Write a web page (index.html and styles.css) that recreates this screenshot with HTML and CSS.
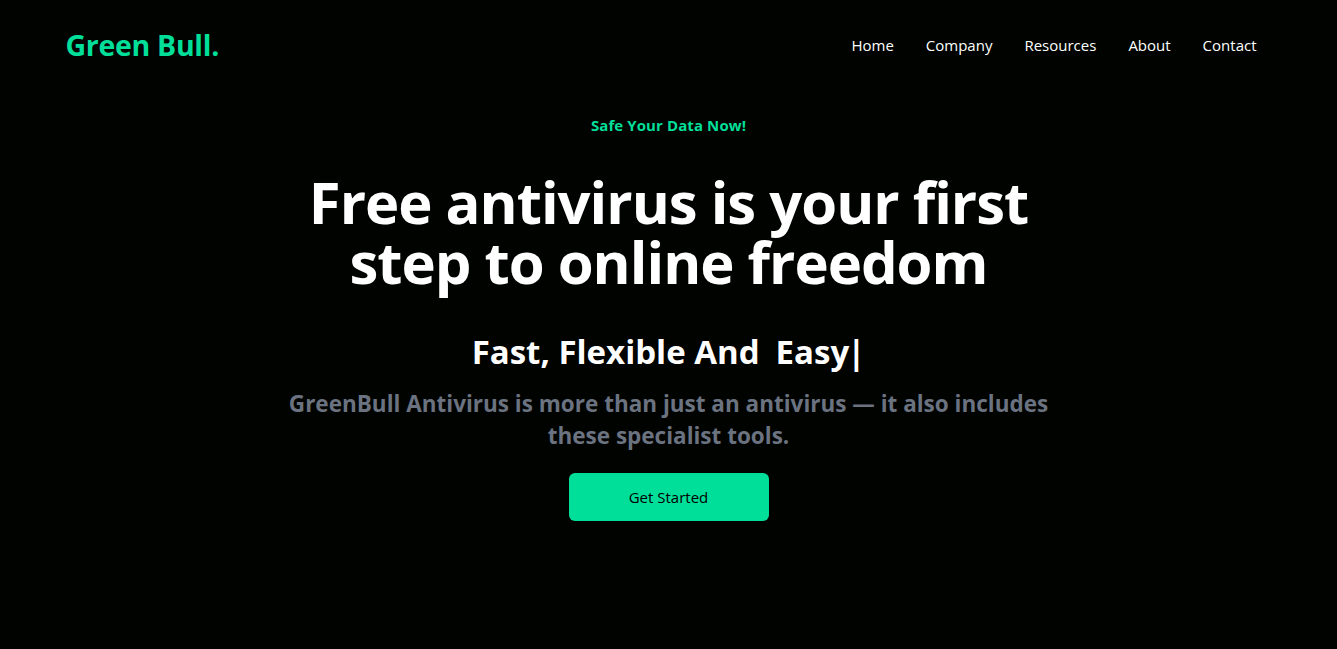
FILE: index.html
```html
<!DOCTYPE html>
<html lang="en">
<head>
<meta charset="utf-8">
<title>Green Bull</title>
<link rel="stylesheet" href="styles.css">
</head>
<body>
<header class="navbar">
  <h1 class="logo">Green Bull.</h1>
  <ul class="nav-links">
    <li>Home</li>
    <li>Company</li>
    <li>Resources</li>
    <li>About</li>
    <li>Contact</li>
  </ul>
</header>
<main class="hero">
  <p class="eyebrow">Safe Your Data Now!</p>
  <h1 class="title">Free antivirus is your first step to online freedom</h1>
  <div class="typed-row">
    <p>Fast, Flexible And</p>
    <span class="typed">Easy<span class="cursor">|</span></span>
  </div>
  <p class="lead">GreenBull Antivirus is more than just an antivirus — it also includes these specialist tools.</p>
  <button class="cta">Get Started</button>
</main>
</body>
</html>
```

FILE: styles.css
```css
* { box-sizing: border-box; margin: 0; padding: 0; }
html, body { background: #000300; }
body {
  font-family: "Open Sans", "Noto Sans", sans-serif;
  color: #fff;
  overflow: hidden;
}
.navbar {
  display: flex;
  justify-content: space-between;
  align-items: center;
  height: 96px;
  max-width: 1240px;
  margin: 0 auto;
  padding: 0 16px 7px;
  position: relative;
  z-index: 2;
}
.logo {
  font-size: 28.5px;
  font-weight: 700;
  color: #00df9a;
  letter-spacing: -0.3px;
  padding-left: 1px;
}
.nav-links {
  display: flex;
  list-style: none;
}
.nav-links li {
  padding: 16px;
  font-size: 15px;
}
.hero {
  max-width: 800px;
  margin: -96px auto 0;
  height: 649px;
  display: flex;
  flex-direction: column;
  justify-content: center;
  text-align: center;
}
.eyebrow {
  color: #00df9a;
  font-weight: 700;
  font-size: 15px;
  padding: 8px;
  line-height: 24px;
  letter-spacing: 0.1px;
}
.title {
  font-size: 58px;
  line-height: 60px;
  font-weight: 700;
  padding: 27px 0 21px;
  letter-spacing: -1px;
}
.typed-row {
  display: flex;
  justify-content: center;
  align-items: center;
  font-size: 33px;
  font-weight: 700;
  line-height: 40px;
  padding: 19px 0 16px;
}
.typed { padding-left: 16px; }
.cursor { font-weight: 700; margin-left: -2px; }
.lead {
  font-size: 22.5px;
  line-height: 32px;
  font-weight: 700;
  color: #6b7280;
}
.cta {
  background: #00df9a;
  width: 200px;
  border: none;
  border-radius: 6px;
  font-family: inherit;
  font-weight: 500;
  font-size: 15px;
  margin: 21px auto 24px;
  padding: 12px 0;
  line-height: 24px;
  color: #000;
}
```
